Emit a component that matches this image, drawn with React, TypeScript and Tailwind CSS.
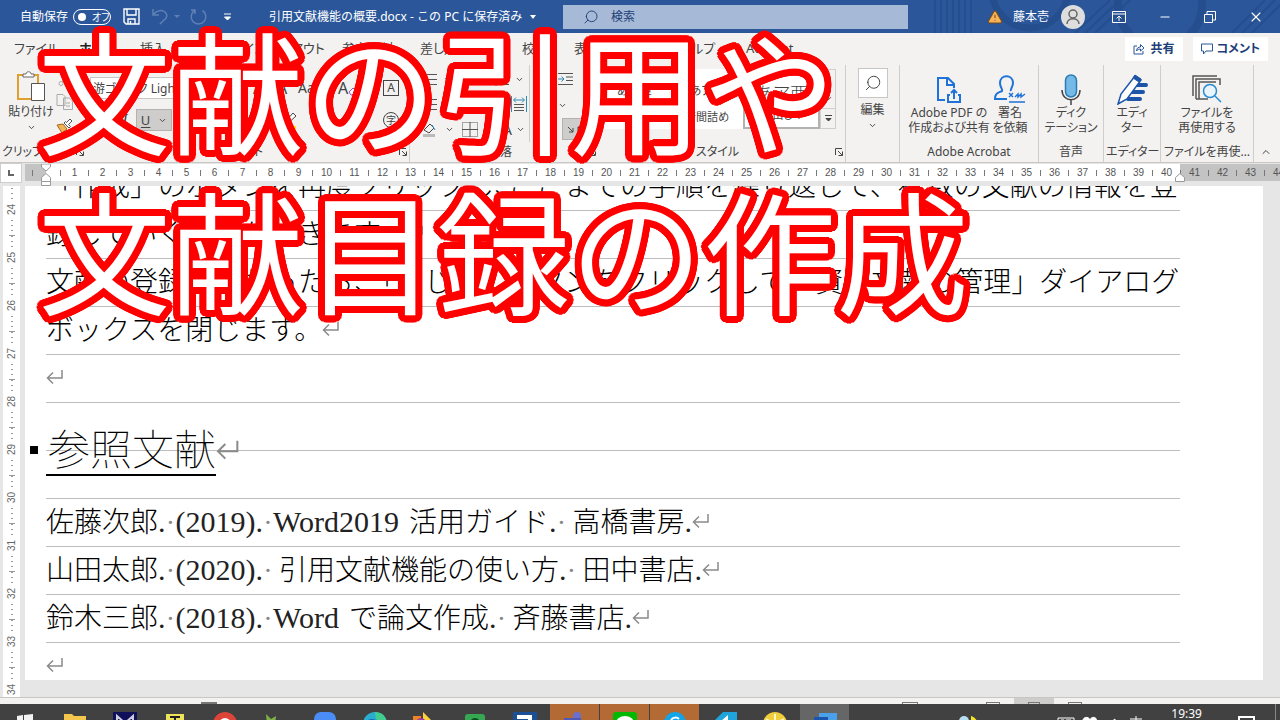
import type { ReactNode } from 'react'
import { AlertTriangle, ChevronDown, ChevronUp, Minus, Search, X } from 'lucide-react'
import clsx from 'clsx'

const TABS = [
  { label: 'ファイル', width: 'w-[65px]' },
  { label: 'ホーム', width: 'w-[61px]', active: true },
  { label: '挿入', width: 'w-[46px]' },
  { label: '描画', width: 'w-[32px]' },
  { label: 'デザイン', width: 'w-[50px]' },
  { label: 'レイアウト', width: 'w-[74px]' },
  { label: '参考資料', width: 'w-[78px]' },
  { label: '差し込み文書', width: 'w-[102px]' },
  { label: '校閲', width: 'w-[52px]' },
  { label: '表示', width: 'w-[52px]' },
  { label: '開発', width: 'w-[52px]' },
  { label: 'ヘルプ', width: 'w-[68px]' },
  { label: 'Acrobat', width: 'w-[60px]' },
]

const range = (from: number, to: number) =>
  Array.from({ length: to - from + 1 }, (_, i) => from + i)

// ── Small shared pieces ─────────────────────────────────────────────────────

function Chevron({ className }: { className?: string }) {
  return <ChevronDown size={9} strokeWidth={2.5} className={clsx('shrink-0 text-[#444]', className)} />
}

function Launcher() {
  return (
    <svg width="8" height="8" viewBox="0 0 8 8" fill="none" stroke="#444" className="shrink-0">
      <path d="M.5 7V.5H7M3 3l4 4M7.5 3.5v4h-4" />
    </svg>
  )
}

function Group({
  label,
  className,
  launcher,
  last,
  children,
}: {
  label?: string
  className: string
  launcher?: boolean
  last?: boolean
  children: ReactNode
}) {
  return (
    <section className={clsx('flex h-full shrink-0 flex-col', className)}>
      <div className={clsx('flex min-h-0 flex-1 flex-col border-[#d0cecc]', !last && 'border-r')}>
        <div className="flex min-h-0 flex-1">{children}</div>
        <div className="flex h-5 items-center px-0.5">
          <span className="flex-1 whitespace-nowrap text-center text-xs text-[#444]">{label}</span>
          {launcher && <Launcher />}
        </div>
      </div>
    </section>
  )
}

function BigButton({ icon, lines, className }: { icon: ReactNode; lines: string[]; className?: string }) {
  return (
    <button type="button" className={clsx('flex flex-col items-center pt-1', className)}>
      <span className="flex h-8 items-center justify-center">{icon}</span>
      {lines.map(line => (
        <span key={line} className="whitespace-nowrap text-xs leading-[15px]">{line}</span>
      ))}
    </button>
  )
}

function Return({ large }: { large?: boolean }) {
  return (
    <svg
      viewBox="0 0 18 16"
      className={clsx('inline-block align-[3px]', large ? 'h-6 w-6' : 'h-4 w-[18px]')}
      fill="none"
      stroke="#8a8a8a"
      strokeWidth="1.5"
    >
      <path d="M16 1v8H2M7 3.5 1.5 9 7 14.5" />
    </svg>
  )
}

// ── Title bar ───────────────────────────────────────────────────────────────

function TitleBar() {
  return (
    <header className="relative flex h-[33px] shrink-0 items-center overflow-hidden bg-[#2b579a] text-xs text-white">
      <svg className="absolute right-0 top-0 h-full w-[430px]" viewBox="0 0 430 33" fill="none" stroke="#254e8e">
        <path d="M85 0v33M91 0v33M97 0v33M103 0v33M109 0v33M115 0v33M121 0v33" strokeWidth="2" />
        <circle cx="180" cy="-10" r="38" strokeWidth="7" />
        <circle cx="310" cy="5" r="42" strokeWidth="8" />
        <path d="m225 33 35-33M235 33l35-33M245 33l35-33M382 33l33-33M392 33l33-33M402 33l33-33" strokeWidth="2" />
      </svg>
      <div className="relative flex w-full items-center">
        <label className="flex w-[111px] shrink-0 items-center justify-between pl-5">
          <span>自動保存</span>
          <span className="flex h-4 w-[38px] items-center gap-1.5 rounded-full border border-white pl-1">
            <input
              type="checkbox"
              role="switch"
              className="h-2 w-2 appearance-none rounded-full bg-white"
            />
            <span className="text-[10px] leading-none [font-feature-settings:'palt']">オフ</span>
          </span>
        </label>
        <button type="button" aria-label="上書き保存" className="ml-3">
          <svg width="17" height="17" viewBox="0 0 17 17" fill="none" stroke="#fff" strokeWidth="1.4">
            <path d="M1 1h15v15H3l-2-2zM4 1v6h9V1M5 16v-5h7v5M7.5 13v3" />
          </svg>
        </button>
        <button type="button" aria-label="元に戻す" className="ml-3 flex items-center gap-1.5">
          <svg width="16" height="17" viewBox="0 0 16 17" fill="none" stroke="#5f80b4" strokeWidth="1.5">
            <path d="M1 1v6h6M1 7c3-4 8-6 12-3 3 3 2 6-1 8l-4 4" />
          </svg>
          <span className="h-0 w-0 border-x-[3px] border-t-[3px] border-x-transparent border-t-[#5f80b4]" />
        </button>
        <button type="button" aria-label="やり直し" className="ml-2.5">
          <svg width="17" height="17" viewBox="0 0 17 17" fill="none" stroke="#5f80b4" strokeWidth="1.5">
            <path d="M12.500 2.500a7.300 7.300 0 1 1-8 0M1 2h4v4" />
          </svg>
        </button>
        <button type="button" aria-label="クイック アクセス" className="ml-4">
          <svg width="9" height="8" viewBox="0 0 9 8" fill="none" stroke="#fff">
            <path d="M1 1h7M1.500 4h6L4.500 7z" fill="#fff" />
          </svg>
        </button>
        <h1 className="ml-[37px] flex w-[294px] shrink-0 items-center gap-2 whitespace-nowrap">
          引用文献機能の概要.docx - この PC に保存済み
          <span className="h-0 w-0 border-x-[3px] border-t-4 border-x-transparent border-t-white" />
        </h1>
        <label className="flex h-6 min-w-0 flex-[0_1_345px] items-center gap-3 bg-[#a6b9d6] pl-5 text-[#1e3f77]">
          <Search size={16} strokeWidth={1.4} className="-scale-x-100" />
          <input aria-label="検索" placeholder="検索" className="min-w-0 flex-1 bg-transparent outline-none placeholder:text-[#1e3f77]" />
        </label>
        <div className="ml-auto flex shrink-0 items-center pr-4">
          <AlertTriangle size={16} fill="#f6b35a" stroke="#7a4a14" strokeWidth={1.6} />
          <span className="ml-2.5">藤本壱</span>
          <span className="ml-3 flex h-6 w-6 items-center justify-center rounded-full bg-[#dedede]">
            <svg width="16" height="18" viewBox="0 0 16 18" fill="none" stroke="#666" strokeWidth="1.5">
              <circle cx="8" cy="6" r="4" />
              <path d="M2 16c0-7 12-7 12 0" />
            </svg>
          </span>
          <button type="button" aria-label="リボンの表示オプション" className="ml-[27px]">
            <svg width="14" height="12" viewBox="0 0 14 12" fill="none" stroke="#fff">
              <path d="M.5.5h13v11H.5zM.5 3h13M7 10V5M4.500 7.500 7 5l2.500 2.500" />
            </svg>
          </button>
          <button type="button" aria-label="最小化" className="ml-8"><Minus size={14} strokeWidth={2} /></button>
          <button type="button" aria-label="元に戻す (縮小)" className="ml-8">
            <svg width="12" height="12" viewBox="0 0 12 12" fill="none" stroke="#fff">
              <path d="M.5 3.500h8v8h-8zM3 3.500v-3h8.500V9h-3" />
            </svg>
          </button>
          <button type="button" aria-label="閉じる" className="ml-8"><X size={16} strokeWidth={1.7} /></button>
        </div>
      </div>
    </header>
  )
}

// ── Tabs ────────────────────────────────────────────────────────────────────

function TabRow() {
  return (
    <nav className="flex h-8 shrink-0 items-center pl-3.5 pr-3 text-[13px] text-[#444] [font-feature-settings:'palt']">
      {TABS.map(tab => (
        <button
          key={tab.label}
          type="button"
          className={clsx('shrink-0 whitespace-nowrap text-left', tab.width, tab.active && 'font-bold text-[#222]')}
        >
          {tab.label}
        </button>
      ))}
      <div className="ml-auto flex gap-2.5 text-xs font-bold text-[#1e3f77]">
        <button type="button" className="flex h-6 items-center gap-1.5 whitespace-nowrap bg-white px-2">
          <svg width="12" height="12" viewBox="0 0 12 12" fill="none" stroke="#2b579a">
            <path d="M4 3H1v8h9V8M3.500 8c0-3 2-4 4-4V1.500L11 5 7.500 8V6c-2 0-3 .500-4 2z" />
          </svg>
          共有
        </button>
        <button type="button" className="flex h-6 items-center gap-1 whitespace-nowrap bg-white px-2">
          <svg width="12" height="12" viewBox="0 0 12 12" fill="none" stroke="#2b579a">
            <path d="M.5 1h11v7H5l-2.500 3V8h-2z" />
          </svg>
          コメント
        </button>
      </div>
    </nav>
  )
}

// ── Ribbon groups ───────────────────────────────────────────────────────────

function ClipboardGroup() {
  return (
    <Group label="クリップボード" className="w-[86px]" launcher last>
      <button type="button" className="flex w-[54px] shrink-0 flex-col items-center pl-2 pt-1.5">
        <svg width="28" height="31" viewBox="0 0 28 31" fill="none">
          <path d="M14 28H1V4h20v8" stroke="#e0a030" strokeWidth="2" />
          <path d="M6 6V3h3c0-3 5-3 5 0h3v3z" fill="#fff" stroke="#666" />
          <path d="M14.500 12.500h13v17h-13z" fill="#fff" stroke="#555" />
        </svg>
        <span className="mt-0.5 whitespace-nowrap text-xs leading-[15px]">貼り付け</span>
        <Chevron className="mt-1" />
      </button>
      <div className="flex flex-col gap-2 pl-0.5 pt-2">
        <svg width="16" height="13" viewBox="0 0 16 13" fill="none" stroke="#aaa">
          <path d="m5 0 5 9M11 0 6 9" />
          <circle cx="5" cy="10.500" r="2" />
          <circle cx="11" cy="10.500" r="2" />
        </svg>
        <svg width="17" height="16" viewBox="0 0 17 16" fill="#f3f2f1" stroke="#aaa">
          <path d="M1 .5h6l2 2v9H1zM7.500 4h6l3 3v8.500h-9zM10 9h4M10 12h4" />
        </svg>
        <svg width="17" height="16" viewBox="0 0 17 16">
          <path d="m1 7 6-1 4 5-5 4z" fill="#f2b257" stroke="#a66a18" />
          <path d="m8 5 5 5 1.500-1.500-2-2L16 3l-2-2-3.500 3.500-1-1z" fill="#fff" stroke="#555" />
        </svg>
      </div>
    </Group>
  )
}

function FontGroup() {
  return (
    <Group label="フォント" className="w-[324px]" launcher>
      <div className="flex flex-1 flex-col gap-2.5 pl-1 pt-3 text-base">
        <div className="flex h-[22px] items-center">
          <input
            aria-label="フォント名"
            defaultValue="游ゴシック Light"
            className="h-[22px] w-[108px] border border-[#c8c6c4] bg-white px-0.5 text-xs [font-feature-settings:'palt']"
          />
          <input aria-label="サイズ" defaultValue="16" className="h-[22px] w-10 border border-[#c8c6c4] bg-white px-1 text-xs" />
          <button type="button" className="ml-2 w-6">A</button>
          <button type="button" className="w-6">A</button>
          <button type="button" className="ml-1 w-10 text-left text-sm">Aa</button>
          <button type="button" aria-label="書式のクリア" className="flex items-end">
            A
            <svg width="9" height="9" viewBox="0 0 9 9" fill="#fff" stroke="#9b4fb5" className="mb-1">
              <path d="m1 5 4-4 3 3-4 4H3z" />
            </svg>
          </button>
          <button type="button" className="ml-auto mr-2.5 h-4 w-4 border border-[#444] text-xs leading-[14px]">A</button>
        </div>
        <div className="flex h-[22px] items-center">
          <button type="button" className="w-6 font-bold">B</button>
          <button type="button" className="w-[22px] font-['Liberation_Serif',serif] italic">I</button>
          <button type="button" className="flex h-[22px] w-9 items-center justify-around border border-[#b4b2b0] bg-[#cfcdcb]">
            <span className="text-[13px] leading-none underline underline-offset-2">U</span>
            <Chevron />
          </button>
          <button type="button" className="ml-3 w-8 text-xs line-through">ab</button>
          <button type="button" className="w-6 text-xs">x₂</button>
          <button type="button" className="w-6 text-xs">x²</button>
          <button type="button" aria-label="蛍光ペン" className="ml-4">
            <svg width="18" height="17" viewBox="0 0 18 17">
              <path d="M4 11 13 1l3 3-10 9H4z" fill="#fff" stroke="#444" />
              <path d="M1 14h15v3H1z" fill="#fff000" />
            </svg>
          </button>
          <button type="button" className="ml-5 w-6 text-sm">A</button>
          <button type="button" className="ml-2 h-4 w-4 bg-[#bdbbb9] text-sm leading-4">A</button>
          <button type="button" className="ml-auto mr-2.5 h-4 w-4 rounded-full border border-[#444] text-[10px] leading-[14px]">字</button>
        </div>
      </div>
    </Group>
  )
}

function ListIcon() {
  return (
    <svg width="15" height="13" viewBox="0 0 15 13" stroke="#555" fill="none">
      <path d="M5 1.500h10M5 6.500h10M5 11.500h10" />
      <path d="M1 1.500h2M1 6.500h2M1 11.500h2" stroke="#2b7cb5" strokeWidth="2" />
    </svg>
  )
}

function ParagraphGroup() {
  return (
    <Group label="段落" className="w-[188px]" launcher last>
      <div className="flex w-[120px] shrink-0 flex-col gap-2.5 border-r border-[#d0cecc] pl-3 pt-2">
        <div className="flex items-center gap-1.5"><ListIcon /><Chevron /><ListIcon /><Chevron /><ListIcon /><Chevron /></div>
        <div className="flex items-center justify-between pr-0.5">
          <ListIcon />
          <ListIcon />
          <svg width="16" height="16" viewBox="0 0 16 16" fill="none" stroke="#555">
            <path d="M3 8.500h10M3 11.500h10M3 14.500h10" />
            <path d="M.5 0v16M15.500 0v16M3 4h10M5 1.500 2.500 4 5 6.500M11 1.500 13.500 4 11 6.500" stroke="#2b8bb5" />
          </svg>
        </div>
        <div className="flex items-center gap-2">
          <svg width="15" height="14" viewBox="0 0 15 14" fill="none" stroke="#2b7cb5">
            <path d="m2 7 6-6 4 4-5 5z" stroke="#444" />
            <path d="M1 12.500h12" strokeWidth="3" stroke="#bbb" />
            <path d="m10 2 3 5" />
          </svg>
          <Chevron />
          <svg width="16" height="15" viewBox="0 0 16 15" fill="none" stroke="#555">
            <path d="M.5.5h15v14H.5z" strokeDasharray="1 1" />
            <path d="M8 0v15M0 7.500h16" />
          </svg>
          <Chevron />
          <span className="flex items-center text-sm leading-none">A<Chevron className="ml-1" /></span>
        </div>
      </div>
      <div className="flex flex-col items-start pl-7 pt-2">
        <svg width="15" height="12" viewBox="0 0 15 12" fill="none" stroke="#555">
          <path d="M0 .5h15M8 4h7M8 7.500h7M0 11.500h15" />
          <path d="M0 6h6M3.500 3.500 6 6 3.500 8.500" stroke="#2b8bb5" />
        </svg>
        <Chevron className="mt-4" />
        <button type="button" aria-label="折り返し" className="ml-1 mt-2 flex h-[22px] w-7 items-center justify-center border border-[#b4b2b0] bg-[#cfcdcb]">
          <svg width="18" height="14" viewBox="0 0 18 14" fill="none" stroke="#444">
            <path d="m1 5 5 5M6 6v4H2M17 11l-6-6M11 9V5h4" />
          </svg>
        </button>
      </div>
    </Group>
  )
}

const STYLES = [
  { name: '標準', sample: 'あア亜', look: 'text-xs' },
  { name: '行間詰め', sample: 'あア亜', look: 'text-xs' },
  { name: '見出し 1', sample: 'あア亜', look: 'text-lg font-light', selected: true },
]

function StylesGroup() {
  return (
    <Group label="スタイル" className="w-[248px]" launcher>
      <div className="mt-1 flex h-[60px] flex-1 justify-end pr-2.5">
        <div className="flex w-[222px] bg-white">
          {STYLES.map(style => (
            <button
              key={style.name}
              type="button"
              className={clsx(
                'flex flex-1 flex-col items-center justify-between pb-1 pt-3',
                style.selected && 'border-2 border-[#b4b2b0]',
              )}
            >
              <span className={clsx('leading-5', style.look)}>{style.sample}</span>
              <span className="whitespace-nowrap text-[11px] leading-4">{style.name}</span>
            </button>
          ))}
        </div>
        <div className="flex w-4 flex-col border border-[#d0cecc]">
          <button type="button" aria-label="前の行" className="flex flex-1 items-center justify-center"><ChevronUp size={9} /></button>
          <button type="button" aria-label="次の行" className="flex flex-1 items-center justify-center"><Chevron /></button>
          <button type="button" aria-label="その他" className="flex flex-1 items-center justify-center border-t border-[#d0cecc]">
            <svg width="7" height="7" viewBox="0 0 7 7" fill="#444" stroke="#444">
              <path d="M0 .5h7M1 3.500h5L3.500 6z" />
            </svg>
          </button>
        </div>
      </div>
    </Group>
  )
}

function Ribbon() {
  return (
    <div className="flex h-[98px] shrink-0 overflow-hidden border-b border-[#c8c6c4] text-[#444] [font-feature-settings:'palt']">
      <ClipboardGroup />
      <FontGroup />
      <ParagraphGroup />
      <StylesGroup />
      <Group className="w-[54px]">
        <button type="button" className="flex flex-1 flex-col items-center pt-[3px]">
          <span className="flex h-[30px] w-[30px] items-center justify-center border border-[#c8c6c4] bg-white">
            <Search size={18} strokeWidth={1.3} className="-scale-x-100" />
          </span>
          <span className="mt-1 text-xs leading-[15px]">編集</span>
          <Chevron className="mt-1" />
        </button>
      </Group>
      <Group label="Adobe Acrobat" className="w-[139px]">
        <BigButton
          className="ml-1.5 mt-1 w-[86px]"
          lines={['Adobe PDF の', '作成および共有']}
          icon={
            <svg width="24" height="27" viewBox="0 0 24 27" fill="none" stroke="#1f72d8" strokeWidth="2">
              <path d="M8 24H1V2h10l6 6v4M10 2v7h7" />
              <path d="M13 19h-2v7h12v-7h-2M17 23v-9M14 17l3-3 3 3" />
            </svg>
          }
        />
        <BigButton
          className="mt-1 w-9"
          lines={['署名', 'を依頼']}
          icon={
            <svg width="32" height="28" viewBox="0 0 32 28" fill="none" stroke="#1f72d8" strokeWidth="2">
              <path d="M13 24H1c0-6 3-6 7-8 1-2-2-3-2-8 0-9 13-9 13 0 0 4-3 6-2 8" />
              <path d="m15 18 4 4M19 18l-4 4M21 22l3-3v3l3-3v3l4-3M15 27h16" strokeWidth="1.500" />
            </svg>
          }
        />
      </Group>
      <Group label="音声" className="w-[65px]">
        <BigButton
          className="mt-1 flex-1"
          lines={['ディク', 'テーション']}
          icon={
            <svg width="20" height="31" viewBox="0 0 20 31" fill="none" stroke="#444" strokeWidth="1.500">
              <rect x="4.500" y="1" width="11" height="22" rx="5.500" fill="#75b9e8" stroke="#2b7cb5" />
              <path d="M1 16c0 13 18 13 18 0M10 26v5" />
            </svg>
          }
        />
      </Group>
      <Group label="エディター" className="w-[57px]">
        <BigButton
          className="mt-1 flex-1"
          lines={['エディ', 'ター']}
          icon={
            <svg width="31" height="31" viewBox="0 0 31 31" fill="none" stroke="#1c54a8">
              <path d="M17 11h12M15 18h11M11 25h12" strokeWidth="4" strokeLinecap="round" />
              <path d="m1 30 3-10L18 2l6 4L10 25z" fill="#fff" strokeWidth="1.500" />
              <path d="m18 1 6 4-2 3-6-4z" fill="#1c54a8" />
            </svg>
          }
        />
      </Group>
      <Group label="ファイルを再使…" className="w-[93px]">
        <BigButton
          className="mt-1 flex-1"
          lines={['ファイルを', '再使用する']}
          icon={
            <svg width="30" height="28" viewBox="0 0 30 28" fill="none" stroke="#555">
              <path d="M1 21V1h24M4 24V4h24v6M7 24V7h17" strokeWidth="1.500" />
              <path d="M4 24h12" strokeWidth="1.500" />
              <circle cx="18" cy="16" r="6.500" fill="#eaf4fb" stroke="#2b8bd0" strokeWidth="1.500" />
              <path d="m23 21 6 6" stroke="#2b8bd0" strokeWidth="1.500" />
            </svg>
          }
        />
      </Group>
      <button type="button" aria-label="リボンを折りたたむ" className="ml-auto flex items-end pb-1 pr-2">
        <ChevronUp size={12} />
      </button>
    </div>
  )
}

// ── Rulers ──────────────────────────────────────────────────────────────────

function RulerCell({ n }: { n: number }) {
  return (
    <span className="flex w-7 shrink-0 items-center text-[10px] text-[#555]">
      <span className="h-1.5 w-px bg-[#777]" />
      <span className="flex-1 text-center">{n}</span>
    </span>
  )
}

function IndentMarker({ both }: { both?: boolean }) {
  return (
    <svg width="10" height="22" viewBox="0 0 10 22" fill="#fff" stroke="#999" className="absolute -left-[5px] top-0 z-10">
      {both && <path d="M.5 0h9v3L5 7 .5 3zM.5 17.500h9v4h-9z" />}
      <path d="M.5 17.500v-4L5 9.500l4.500 4v4z" />
    </svg>
  )
}

function HorizontalRuler() {
  return (
    <div className="flex h-[23px] shrink-0 items-start overflow-hidden bg-[#e6e6e6] font-['Liberation_Sans',sans-serif]">
      <div className="flex h-5 w-[22px] shrink-0 items-center justify-center border border-[#d0cecc] bg-white">
        <svg width="8" height="8" viewBox="0 0 8 8" fill="none" stroke="#666" strokeWidth="2"><path d="M2 1v5h5" /></svg>
      </div>
      <div className="ml-[3px] mt-px flex h-[17px] w-[21px] shrink-0 items-center bg-[#c3c3c3] pl-[7px]">
        <span className="h-1.5 w-px bg-[#777]" />
      </div>
      <div className="relative mt-px flex h-[17px] w-[1134px] shrink-0 bg-white pl-3.5">
        <IndentMarker both />
        {range(1, 40).map(n => <RulerCell key={n} n={n} />)}
      </div>
      <div className="relative mt-px flex h-[17px] min-w-0 flex-1 bg-[#c3c3c3]">
        <IndentMarker />
        {range(41, 44).map(n => <RulerCell key={n} n={n} />)}
      </div>
    </div>
  )
}

function VerticalRuler() {
  return (
    <div className="ml-[3px] mr-[5px] w-[17px] shrink-0 overflow-hidden bg-white pt-0.5 font-['Liberation_Sans',sans-serif]">
      {range(24, 34).map(n => (
        <div key={n} className="flex h-12 flex-col items-center justify-between text-[#666]">
          <span className="h-px w-0.5 bg-[#999]" />
          <span className="h-px w-0.5 bg-[#999]" />
          <span className="h-px w-0.5 bg-[#999]" />
          <span className="h-3 rotate-180 text-[10px] leading-[17px] [writing-mode:vertical-rl]">{n}</span>
          <span className="h-px w-0.5 bg-[#999]" />
          <span className="h-px w-0.5 bg-[#999]" />
          <span className="h-px w-0.5 bg-[#999]" />
          <span className="h-px w-1.5 bg-[#999]" />
        </div>
      ))}
    </div>
  )
}

// ── Document ────────────────────────────────────────────────────────────────

function Latin({ children }: { children: ReactNode }) {
  return <span className="font-['Liberation_Serif',serif] text-[30px] font-normal leading-none text-[#222]">{children}</span>
}

function Space({ wide }: { wide?: boolean }) {
  return (
    <span className={clsx("inline-block w-2.5 text-center font-['Liberation_Serif',serif] text-[#888]", wide && 'mr-1.5')}>·</span>
  )
}

function Line({ children }: { children: ReactNode }) {
  return <p className="h-12 shrink-0 whitespace-nowrap text-[28px] leading-[46px]">{children}</p>
}

function Reference({ author, year, latin, title, publisher }: {
  author: string
  year: number
  latin?: string
  title: string
  publisher: string
}) {
  return (
    <Line>
      {author}<Latin>.</Latin><Space /><Latin>({year}).</Latin><Space wide={!latin} />
      {latin && <span className="mr-2.5"><Latin>{latin}</Latin></span>}
      {title}<Latin>.</Latin><Space wide />{publisher}<Latin>.</Latin><Return />
    </Line>
  )
}

function Document() {
  return (
    <main className="mb-[17px] mr-[17px] min-w-0 flex-1 overflow-hidden bg-white pl-[21px] font-light text-black">
      <div className="flex h-full w-[1134px] flex-col bg-[linear-gradient(to_bottom,transparent_47px,#bdbdbd_47px)] bg-[length:100%_48px] bg-[position:0_-23px]">
        <div className="flex h-6 shrink-0 items-end overflow-hidden">
          <Line>
            「作成」のボタンを再度クリックし<span className="[font-feature-settings:'halt']">、</span>
            ここまでの手順を繰り返して、複数の文献の情報を登
          </Line>
        </div>
        <Line>録していくことができます。<Return /></Line>
        <Line>文献の登録が終わったら、「閉じる」ボタンをクリックして「資料文献の管理」ダイアログ</Line>
        <Line>ボックスを閉じます。<Return /></Line>
        <Line><Return /></Line>
        <h2 className="relative flex h-24 shrink-0 items-center whitespace-nowrap text-[42px] font-thin">
          <span className="absolute -left-4 top-11 h-2 w-2 bg-black" />
          <span className="border-b-2 border-black pl-0.5 leading-[50px]">参照文献</span>
          <Return large />
        </h2>
        <Reference author="佐藤次郎" year={2019} latin="Word2019" title="活用ガイド" publisher="高橋書房" />
        <Reference author="山田太郎" year={2020} title="引用文献機能の使い方" publisher="田中書店" />
        <Reference author="鈴木三郎" year={2018} latin="Word" title="で論文作成" publisher="斉藤書店" />
        <Line><Return /></Line>
      </div>
    </main>
  )
}

// ── Bottom bars ─────────────────────────────────────────────────────────────

function StatusBar() {
  return (
    <footer className="flex h-[7px] shrink-0 justify-between overflow-hidden border-t border-[#c8c6c4] bg-[#f3f2f1]">
      <span className="ml-[201px] mt-1 h-2 w-4 border-t-2 border-[#777]" />
      <div className="mr-[198px] flex">
        <span className="mr-[68px] mt-1 h-2 w-4 border border-[#777]" />
        <span className="mr-3.5 mt-1 h-2 w-3.5 border border-[#777]" />
        <span className="flex w-10 justify-center bg-[#cfcdcb] pt-1"><span className="h-2 w-3 border border-[#777]" /></span>
        <span className="ml-3.5 mt-1 h-2 w-3.5 border border-[#777]" />
      </div>
    </footer>
  )
}

const APPS: { name: string; tone?: string; art: ReactNode }[] = [
  { name: 'スタート', art: <path d="m4 4 6-1v8H4zM11 3l9-1v9h-9z" fill="#f3f3f3" /> },
  { name: 'エクスプローラー', art: <path d="M1 2h8l2 2h12v12H1z" fill="#f4c64e" /> },
  { name: 'M', art: <><path d="M0 0h24v20H0z" fill="#10105a" /><path d="M4 12V4l8 7 8-7v8" stroke="#ccd" strokeWidth="2" fill="none" /></> },
  { name: 'T', art: <><path d="M3 2h18v16H3z" fill="#eee35a" /><path d="M7 5h10M12 5v9" stroke="#222" strokeWidth="2" /></> },
  { name: 'Chrome', art: <><circle cx="12" cy="12" r="12" fill="#dc4538" /><circle cx="12" cy="12" r="6" fill="#fff" /></> },
  { name: 'グリーン', art: <path d="m3 2 5 5 5-3-1 8H4z" fill="#7cb342" /> },
  { name: 'Zoom', art: <rect x="1" width="22" height="22" rx="7" fill="#4a8df7" /> },
  { name: 'Edge', art: <><circle cx="12" cy="12" r="12" fill="#2aaed0" /><path d="M12 0c8 0 12 6 12 12L13 7z" fill="#44ce8d" /><circle cx="9" cy="15" r="8" fill="#1667b5" /></> },
  { name: 'フォト', art: <><path d="M0 4h8v10H0z" fill="#f08424" /><path d="m10 0 8 8-8 8z" fill="#ffd23c" /><circle cx="8" cy="11" r="5" fill="#9b3fa5" /></> },
  { name: 'カメラ', art: <><rect x="2" y="2" width="20" height="18" rx="3" fill="#35a852" /><circle cx="12" cy="11" r="5" fill="#0c5020" /></> },
  { name: 'ショートカット', art: <><path d="M0 0h24v20H0z" fill="#1c5096" /><path d="M4 3h15v12h-4V7H4z" fill="#fff" /></> },
  { name: 'Teams', tone: 'bg-[#b46a34]', art: <><circle cx="14" cy="4" r="4" fill="#6a6fd0" /><path d="M1 6h17v12H1z" fill="#5058b8" /></> },
  { name: 'LINE', tone: 'bg-[#b46a34]', art: <><rect width="24" height="24" rx="3" fill="#00b900" /><ellipse cx="12" cy="11" rx="9" ry="7" fill="#fff" /></> },
  { name: 'Skype', tone: 'bg-[#b46a34]', art: <><circle cx="12" cy="11" r="11" fill="#12a5e8" /><path d="M8 8c2-3 6-3 8-1" stroke="#fff" strokeWidth="2" fill="none" /></> },
  { name: 'クリップ', art: <><path d="M2 8 10 0h15v20H2z" fill="#20a4dc" /><path d="m8 9 7-6v10z" fill="#fff" /></> },
  { name: 'レモン', art: <><circle cx="12" cy="12" r="12" fill="#f0cd3a" /><path d="M12 2v10M3 7l9 5 9-5" stroke="#fff7c0" strokeWidth="2" fill="none" /></> },
  { name: 'Word', tone: 'bg-[#666]', art: <><path d="M6 1h18v16H6z" fill="#4aa0ea" /><path d="M1 5h14v12H1z" fill="#1a56b0" /></> },
]

function Taskbar() {
  return (
    <div className="flex h-4 shrink-0 overflow-hidden bg-[#414141] text-white">
      {APPS.map(app => (
        <button
          key={app.name}
          type="button"
          aria-label={app.name}
          className={clsx('flex h-10 w-[50px] shrink-0 justify-center border-r pt-2', app.tone ?? 'bg-[#414141]', app.tone ? 'border-[#414141]' : 'border-transparent')}
        >
          <svg width="24" height="24" viewBox="0 0 24 24">{app.art}</svg>
        </button>
      ))}
      <div className="ml-auto flex shrink-0 items-start">
        <svg width="20" height="20" viewBox="0 0 20 20" className="mr-[78px] mt-3">
          <circle cx="5" cy="5" r="5" fill="#b5dcf0" />
          <path d="M12 0c8 3 8 9 0 12z" fill="#f4e424" />
        </svg>
        <svg width="86" height="16" viewBox="0 0 86 16" fill="none" stroke="#fff" className="mt-3">
          <path d="M1 2h16v10H1zM4 4h3M9 4h5M54 6l4-3v8M63 5l2 3M73 3h12M79 0v8" />
          <path d="M26 8c-2-8 6-8 7-4 1-4 9-4 6 4z" fill="#fff" />
        </svg>
        <time className="ml-7 mt-0.5 text-xs leading-4">19:39</time>
        <svg width="17" height="17" viewBox="0 0 17 17" className="ml-9 mr-5 mt-3" fill="#414141" stroke="#fff" strokeWidth="2">
          <path d="M1 1h15v11H1zM4 5h9" />
        </svg>
        <span className="mr-1 h-4 w-px bg-[#888]" />
      </div>
    </div>
  )
}

// ── Caption ─────────────────────────────────────────────────────────────────

// A ring of hard shadows gives the outline rounded corners
const OUTLINE = Array.from({ length: 32 }, (_, i) => {
  const angle = (i * Math.PI) / 16
  return `${(Math.cos(angle) * 7).toFixed(2)}px ${(Math.sin(angle) * 7).toFixed(2)}px 0 #f00`
}).join(', ')

function Caption() {
  return (
    <p
      className="pointer-events-none absolute left-[38px] top-3.5 z-20 whitespace-nowrap text-[133px] font-normal leading-[160px] text-white"
      style={{ textShadow: OUTLINE }}
    >
      文献の引用や<br />文献目録の作成
    </p>
  )
}

export default function App() {
  return (
    <div
      lang="ja"
      className="relative flex h-screen flex-col overflow-hidden bg-[#f3f2f1] font-['Noto_Sans','Noto_Sans_CJK_JP',sans-serif]"
    >
      <TitleBar />
      <TabRow />
      <Ribbon />
      <HorizontalRuler />
      <div className="flex min-h-0 flex-1 bg-[#e6e6e6]">
        <VerticalRuler />
        <Document />
      </div>
      <StatusBar />
      <Taskbar />
      <Caption />
    </div>
  )
}
